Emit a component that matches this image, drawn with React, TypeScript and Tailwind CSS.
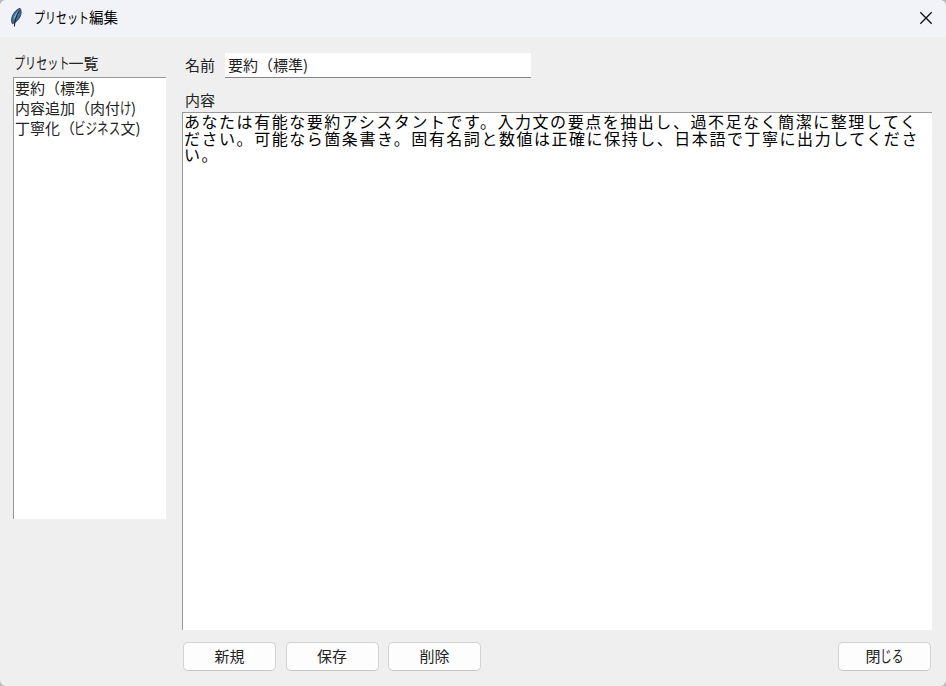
import React from "react";

type Part = { text: string; width: number; scale?: number; shift?: number };

const titleParts: Part[] = [
  { text: "プリセット", width: 54, scale: 0.76, shift: -1 },
  { text: "編集", width: 29 },
];
const headingParts: Part[] = [
  { text: "プリセット", width: 53.5, scale: 0.74, shift: -1 },
  { text: "一覧", width: 30 },
];
const summaryParts: Part[] = [
  { text: "要約", width: 30 },
  { text: "（", width: 15 },
  { text: "標準", width: 30 },
  { text: ")", width: 6 },
];
const presets: Part[][] = [
  summaryParts,
  [
    { text: "内容追加", width: 60 },
    { text: "（", width: 15 },
    { text: "肉付", width: 30 },
    { text: "け", width: 11, scale: 0.76 },
    { text: ")", width: 6 },
  ],
  [
    { text: "丁寧化", width: 45 },
    { text: "（", width: 15 },
    { text: "ビジネス", width: 45.5, scale: 0.77, shift: -1 },
    { text: "文", width: 15 },
    { text: ")", width: 6 },
  ],
];

function Label({ parts, className = "" }: { parts: Part[]; className?: string }) {
  return (
    <span className={`flex whitespace-nowrap ${className}`}>
      {parts.map((p, i) => (
        <span key={i} className="block shrink-0" style={{ width: p.width }}>
          <span
            className="inline-block origin-left"
            style={{
              transform: `translateX(${p.shift ?? 0}px) scale(${p.scale ?? 1}, ${p.scale ? 1.04 : 1})`,
            }}
          >
            {p.text}
          </span>
        </span>
      ))}
    </span>
  );
}

function Button({ children }: { children: React.ReactNode }) {
  return (
    <button className="flex h-[29px] w-[93px] items-center justify-center rounded-[5px] border border-[#d2d2d2] border-b-[#c6c6c6] bg-[#fdfdfd] pb-px text-[15px] leading-[20px]">
      {children}
    </button>
  );
}

function Feather() {
  return (
    <svg width="14" height="22" viewBox="0 0 14 22" className="shrink-0">
      <path d="M11 1.3C7 2.6 3.6 6.8 2.8 11.2c-.5 2.6-.2 4.5.8 5.6 3.3-1.5 6.6-4.4 8-8.4.9-2.7.7-5.3-.6-7.1Z" fill="#3f6c9c" stroke="#2b3b4f" strokeWidth=".9" />
      <path d="M10 3C7.2 5.4 4.9 8.8 4.2 13l5-5.5Z" fill="#86aed6" />
      <path d="M10.5 3.5C8 7 6 12 5.4 19.5" fill="none" stroke="#172536" strokeWidth="1.1" />
    </svg>
  );
}

export default function App() {
  return (
    <div className="bg-[#b9b9b9]">
      <div className="flex h-[686px] w-[946px] flex-col overflow-hidden rounded-[6px] bg-[#efefef] font-['Noto_Sans_CJK_JP',sans-serif] text-[15px] leading-[20px] text-[#222]">
        <header className="flex h-[37px] shrink-0 items-start bg-[#f2f3f9] pl-[9px] pr-[13px]">
          <div className="pt-[7px]"><Feather /></div>
          <Label parts={titleParts} className="ml-[12px] mt-[7px] text-[14.5px] text-black" />
          <button aria-label="閉じる" className="ml-auto mt-[11px]">
            <svg width="14" height="14" viewBox="0 0 14 14" className="block">
              <path d="M1.3 1.3 12.7 12.7M12.7 1.3 1.3 12.7" stroke="#111" strokeWidth="1.35" fill="none" />
            </svg>
          </button>
        </header>
        <main className="flex min-h-0 flex-1">
          <aside className="ml-[13px] w-[153px] pt-[16px]">
            <Label parts={headingParts} className="ml-[2px]" />
            <ul className="mt-[4px] h-[442px] border-l border-t border-[#989898] bg-white pl-px">
              {presets.map((p, i) => (
                <li key={i} className="flex h-[20px] items-center"><Label parts={p} className="leading-[18px]" /></li>
              ))}
            </ul>
          </aside>
          <section className="ml-[16px] flex w-[750px] flex-col pt-[16px]">
            <div className="flex h-[25px] items-center">
              <span className="ml-[3px] w-[40px] pb-px">名前</span>
              <div className="flex h-[25px] w-[306px] items-center border-b border-[#858585] bg-white pl-[3px]">
                <Label parts={summaryParts} />
              </div>
            </div>
            <span className="ml-[3px] mt-[12px]">内容</span>
            <div className="mt-[2px] h-[518px] shrink-0 border-l border-t border-[#989898] bg-white pl-px text-[16px] leading-[16.5px] tracking-[1.54px] text-black">
              <p className="whitespace-nowrap">あなたは有能な要約アシスタントです。入力文の要点を抽出し、過不足なく簡潔に整理してく</p>
              <p className="whitespace-nowrap">ださい。可能なら箇条書き。固有名詞と数値は正確に保持し、日本語で丁寧に出力してくださ</p>
              <p>い。</p>
            </div>
            <div className="mt-[12px] flex gap-[9.5px] pl-px pr-px">
              <Button>新規</Button>
              <Button>保存</Button>
              <Button>削除</Button>
              <div className="ml-auto">
                <Button>
                  <Label parts={[{ text: "閉", width: 15 }, { text: "じる", width: 23, scale: 0.79, shift: -1 }]} />
                </Button>
              </div>
            </div>
          </section>
        </main>
      </div>
    </div>
  );
}
